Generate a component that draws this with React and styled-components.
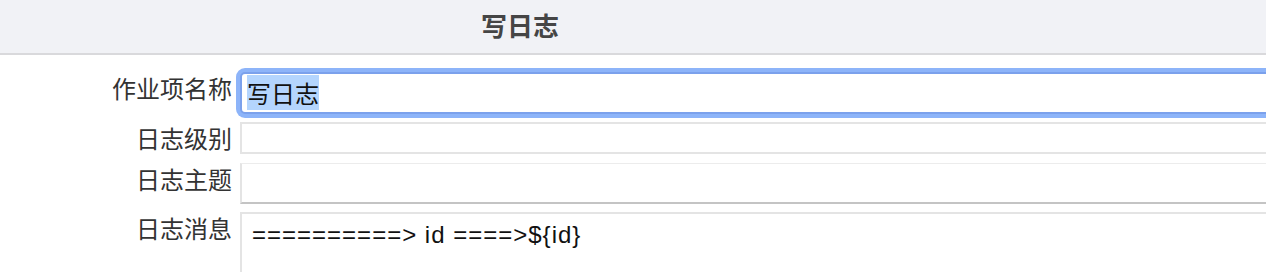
import React from 'react';
import styled, { createGlobalStyle } from 'styled-components';

const GlobalStyle = createGlobalStyle`
    html, body {
        margin: 0;
        padding: 0;
        background: #ffffff;
        overflow: hidden;
    }
    body {
        font-family: "Noto Sans CJK SC", "Noto Sans", sans-serif;
        color: #333333;
    }
`;

const Page = styled.div`
    display: flex;
    flex-direction: column;
    width: 1320px;
`;

const Header = styled.div`
    display: flex;
    height: 53px;
    background: #f1f2f6;
    border-bottom: 2px solid #d9d9dc;
`;

const Title = styled.h1`
    width: 1040px;
    margin: 0;
    font-size: 26px;
    font-weight: 600;
    line-height: 50px;
    text-align: center;
    color: #454545;
`;

const Form = styled.div`
    display: flex;
    flex-direction: column;
    padding-top: 17px;
`;

const Row = styled.div`
    display: flex;
    align-items: flex-start;
    margin-bottom: ${(p) => p.gap || 8}px;
`;

const Label = styled.label`
    flex: 0 0 232px;
    padding-right: 8px;
    font-size: 24px;
    line-height: 32px;
    text-align: right;
    color: #333333;
    white-space: nowrap;
`;

const FocusedField = styled.div`
    flex: 1;
    box-sizing: border-box;
    height: 42px;
    padding: 5px 5px 0 5px;
    border: 2px solid #7ba1ec;
    border-radius: 5px;
    box-shadow: 0 0 0 4px #8db4f9;
    background: #ffffff;
    font-size: 24px;
    line-height: 28px;
    color: #111111;
`;

const Selected = styled.span`
    background: #b4d5fe;
`;

const Field = styled.div`
    flex: 1;
    box-sizing: border-box;
    height: ${(p) => p.height}px;
    background: #ffffff;
    border: 2px solid #e4e4e4;
    border-top-color: ${(p) => p.topColor || '#e4e4e4'};
    border-top-width: ${(p) => p.topWidth || 2}px;
    border-bottom-color: ${(p) => p.bottomColor || '#e4e4e4'};
`;

const TextArea = styled.div`
    flex: 1;
    box-sizing: border-box;
    height: 90px;
    padding: 7px 10px;
    border: 2px solid #e4e4e4;
    background: #ffffff;
    font-family: "Liberation Sans", Arial, sans-serif;
    font-size: 24px;
    line-height: 28px;
    letter-spacing: 1px;
    color: #111111;
    white-space: pre;
`;

export default function App() {
    return (
        <>
            <GlobalStyle />
            <Page>
                <Header>
                    <Title>写日志</Title>
                </Header>
                <Form>
                    <Row gap={8}>
                        <Label>作业项名称</Label>
                        <FocusedField>
                            <Selected>写日志</Selected>
                        </FocusedField>
                    </Row>
                    <Row gap={9}>
                        <Label>日志级别</Label>
                        <Field height={32} />
                    </Row>
                    <Row gap={8}>
                        <Label>日志主题</Label>
                        <Field height={41} topColor="#ececec" topWidth={1} bottomColor="#c4c4c4" />
                    </Row>
                    <Row>
                        <Label>日志消息</Label>
                        <TextArea>{'==========> id ====>${id}'}</TextArea>
                    </Row>
                </Form>
            </Page>
        </>
    );
}
